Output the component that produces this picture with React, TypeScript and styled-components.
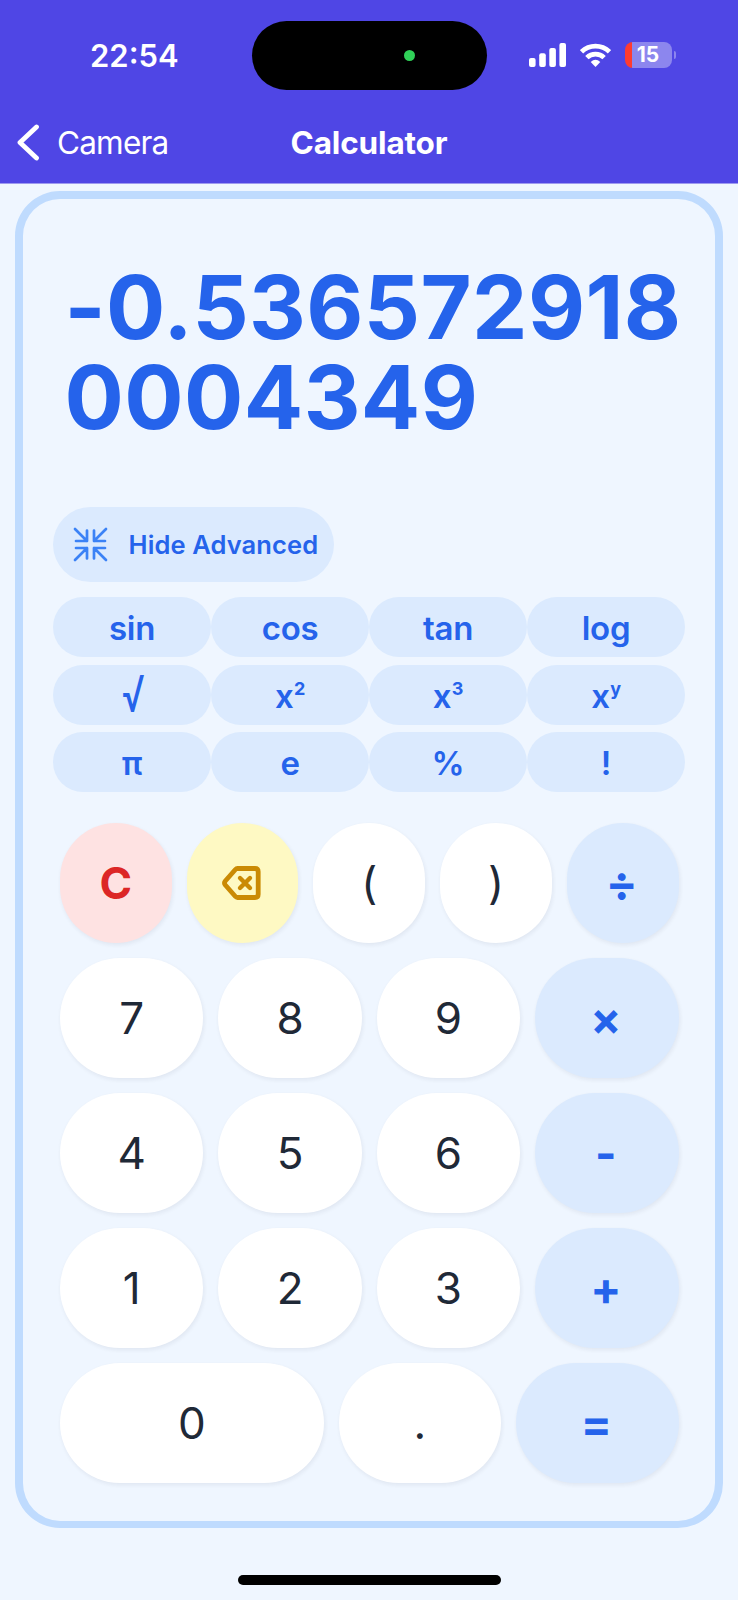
import React from 'react';
import styled, { createGlobalStyle } from 'styled-components';

const GlobalStyle = createGlobalStyle`
  *, *::before, *::after { box-sizing: border-box; }
  body {
    margin: 0;
    background: #eff6ff;
    font-family: Inter, "Liberation Sans", sans-serif;
  }
  button { font-family: inherit; border: 0; padding: 0; margin: 0; }
`;

const Screen = styled.div`
  display: flex;
  flex-direction: column;
  width: 738px;
  height: 1600px;
  background: #eff6ff;
  overflow: hidden;
`;

const Header = styled.header`
  height: 184px;
  background: #4f46e5;
  border-bottom: 1px solid #9d9af0;
  color: #fff;
`;

const StatusBar = styled.div`
  display: grid;
  grid-template-columns: 251.5px 235.5px 1fr;
  height: 90px;
  padding-top: 21px;
`;

const Clock = styled.div`
  padding-left: 90px;
  font-size: 31px;
  line-height: 69px;
  font-weight: 600;
`;

const Island = styled.div`
  display: flex;
  align-items: center;
  justify-content: flex-end;
  padding-right: 72.5px;
  height: 69px;
  border-radius: 35px;
  background: #000;
`;

const CameraDot = styled.span`
  width: 11px;
  height: 11px;
  border-radius: 50%;
  background: #30d158;
`;

const StatusIcons = styled.div`
  display: flex;
  align-items: center;
  height: 68px;
  padding-left: 42px;
`;

const SignalIcon = styled.svg`
  width: 37px;
  height: 24px;
  margin-right: 14px;
`;

const WifiIcon = styled.svg`
  width: 31px;
  height: 24px;
  margin-right: 14px;
`;

const Battery = styled.div`
  display: flex;
  align-items: center;
  justify-content: center;
  width: 47px;
  height: 26px;
  padding-right: 1px;
  border-radius: 8px;
  background: linear-gradient(90deg, #ff3b30 0 7px, #8c86ee 7px);
  font-size: 21px;
  line-height: 26px;
  font-weight: 700;
`;

const BatteryTip = styled.span`
  width: 2.5px;
  height: 8px;
  margin-left: 1.5px;
  border-radius: 0 3px 3px 0;
  background: #8c86ee;
`;

const NavBar = styled.nav`
  display: grid;
  grid-template-columns: 1fr auto 1fr;
  align-items: center;
  height: 93px;
  padding: 11px 17px 0;
`;

const BackLink = styled.div`
  display: flex;
  align-items: center;
  gap: 17px;
`;

const BackLabel = styled.span`
  padding-top: 1px;
  font-size: 31.5px;
  line-height: 40px;
  font-weight: 400;
  letter-spacing: -0.8px;
`;

const Title = styled.h1`
  margin: 0;
  padding-top: 1px;
  font-size: 31.5px;
  line-height: 40px;
  font-weight: 700;
  letter-spacing: -0.15px;
`;

const Panel = styled.main`
  width: 708px;
  height: 1337px;
  margin: 7px 15px 0;
  padding: 56px 30px 0;
  border: 8px solid #bfdbfe;
  border-bottom-width: 7px;
  border-radius: 45px;
  background: #eff6ff;
`;

const Display = styled.div`
  width: 632px;
  height: 252px;
  padding: 7px 0 0 11.5px;
  font-size: 88px;
  line-height: 90px;
  font-weight: 700;
  letter-spacing: 0.4px;
  color: #2563eb;
  word-break: break-all;
`;

const AdvancedToggle = styled.button`
  display: flex;
  align-items: center;
  width: 281px;
  height: 75px;
  padding-left: 20px;
  gap: 20.5px;
  border-radius: 38px;
  background: #dbeafe;
  color: #2563eb;
  font-size: 25.5px;
  font-weight: 600;
  letter-spacing: 0.12px;
  white-space: nowrap;
`;

const FunctionGrid = styled.div`
  display: grid;
  grid-template-columns: repeat(4, 1fr);
  grid-auto-rows: 60px;
  row-gap: 7.5px;
  margin-top: 15px;
`;

const FunctionKey = styled.button`
  padding-top: 2px;
  border-radius: 30px;
  background: #dbeafe;
  color: #2563eb;
  font-size: 33px;
  line-height: 58px;
  font-weight: 600;
  letter-spacing: -0.3px;
`;

const Exponent = styled.sup`
  margin-left: 0.5px;
  font-size: 18px;
  line-height: 0;
  font-weight: 700;
  vertical-align: 12.5px;
`;

const Radical = styled.span`
  display: inline-block;
  line-height: 40px;
  font-weight: 400;
  transform: translate(1px, -2px) scale(1.12, 1.54);
`;

const Keypad = styled.div`
  display: flex;
  flex-direction: column;
  gap: 15px;
  padding: 0 6.5px 0 7px;
  margin-top: 31px;
`;

const KeyRow = styled.div`
  display: flex;
  gap: 15px;
`;

type Tone = 'digit' | 'operator' | 'clear' | 'erase';

const tones: Record<Tone, { background: string; color: string; weight: number }> = {
  digit: { background: '#ffffff', color: '#1f2937', weight: 400 },
  operator: { background: '#dbeafe', color: '#2563eb', weight: 700 },
  clear: { background: '#fee2e2', color: '#dc2626', weight: 700 },
  erase: { background: '#fef9c3', color: '#ca8a04', weight: 700 },
};

const Key = styled.button<{ $tone: Tone; $grow?: number }>`
  display: flex;
  align-items: center;
  justify-content: center;
  flex: ${(p) => p.$grow ?? 1} 1 0;
  height: 120px;
  border-radius: 60px;
  background: ${(p) => tones[p.$tone].background};
  color: ${(p) => tones[p.$tone].color};
  font-size: 44px;
  line-height: 54px;
  font-weight: ${(p) => tones[p.$tone].weight};
  box-shadow: 1px 2px 4px rgba(30, 30, 60, 0.07);
`;

const KeySymbol = styled.span<{ $size: number }>`
  display: flex;
  margin-right: 2px;
  font-size: ${(p) => p.$size}px;
`;

const HomeIndicator = styled.div`
  width: 263px;
  height: 10px;
  margin: 47px auto 0;
  border-radius: 5px;
  background: #000;
`;

const CollapseIcon = () => (
  <svg width="35" height="35" viewBox="0 0 35 35" fill="none" stroke="#3b82f6" strokeWidth="2.7" strokeLinecap="round" strokeLinejoin="round">
    <path d="M2 2 14 14M14 3.5V14H3M33 2 21 14M21 3.5V14H32M2 33 14 21M14 31.5V21H3M33 33 21 21M21 31.5V21H32" />
  </svg>
);

const EraseIcon = () => (
  <svg width="39" height="34" viewBox="0 0 39 34" fill="none" stroke="currentColor" strokeWidth="4.8" strokeLinecap="round" strokeLinejoin="round">
    <path d="M15.5 2.5H33Q36.2 2.5 36.2 5.7V28.3Q36.2 31.5 33 31.5H15.5Q14.3 31.5 13.4 30.5L3.3 19Q1.7 17 3.3 15L13.4 3.5Q14.3 2.5 15.5 2.5Z" />
    <path d="M18 12 28 22M28 12 18 22" strokeWidth="4.4" />
  </svg>
);

const functions: { name: string; label: React.ReactNode }[] = [
  { name: 'sin', label: 'sin' },
  { name: 'cos', label: 'cos' },
  { name: 'tan', label: 'tan' },
  { name: 'log', label: 'log' },
  { name: 'sqrt', label: <Radical>√</Radical> },
  { name: 'square', label: <>x<Exponent>2</Exponent></> },
  { name: 'cube', label: <>x<Exponent>3</Exponent></> },
  { name: 'power', label: <>x<Exponent>y</Exponent></> },
  { name: 'pi', label: 'π' },
  { name: 'e', label: 'e' },
  { name: 'percent', label: '%' },
  { name: 'factorial', label: '!' },
];

const digitRows = [
  ['7', '8', '9', '×'],
  ['4', '5', '6', '-'],
  ['1', '2', '3', '+'],
];

const OperatorKey = ({ symbol, size = 46 }: { symbol: string; size?: number }) => (
  <Key $tone="operator">
    <KeySymbol $size={size}>{symbol}</KeySymbol>
  </Key>
);

export default function App() {
  return (
    <Screen>
      <GlobalStyle />
      <Header>
        <StatusBar>
          <Clock>22:54</Clock>
          <Island>
            <CameraDot />
          </Island>
          <StatusIcons>
            <SignalIcon viewBox="0 0 37 24" fill="#fff">
              <rect x="0" y="15" width="6.6" height="9" rx="2" />
              <rect x="10.2" y="10.2" width="6.6" height="13.8" rx="2" />
              <rect x="20.3" y="5" width="6.6" height="19" rx="2" />
              <rect x="30.4" y="0" width="6.6" height="24" rx="2" />
            </SignalIcon>
            <WifiIcon viewBox="0 0 31 24" fill="none" stroke="#fff" strokeWidth="4.8">
              <path d="M1.5 8.8A20 20 0 0 1 29.5 8.8" />
              <path d="M6.9 14.6A12.3 12.3 0 0 1 24.1 14.6" />
              <path d="M15.5 23.9 10.7 18.9Q15.5 14.6 20.3 18.9Z" fill="#fff" stroke="none" />
            </WifiIcon>
            <Battery>15</Battery>
            <BatteryTip />
          </StatusIcons>
        </StatusBar>
        <NavBar>
          <BackLink>
            <svg width="23" height="37" viewBox="0 0 23 37" fill="none" stroke="#fff" strokeWidth="4.8" strokeLinecap="round" strokeLinejoin="round">
              <path d="M19.5 3 3 18.5 19.5 34" />
            </svg>
            <BackLabel>Camera</BackLabel>
          </BackLink>
          <Title>Calculator</Title>
        </NavBar>
      </Header>
      <Panel>
        <Display>-0.5365729180004349</Display>
        <AdvancedToggle>
          <CollapseIcon />
          Hide Advanced
        </AdvancedToggle>
        <FunctionGrid>
          {functions.map(({ name, label }) => (
            <FunctionKey key={name}>{label}</FunctionKey>
          ))}
        </FunctionGrid>
        <Keypad>
          <KeyRow>
            <Key $tone="clear">C</Key>
            <Key $tone="erase" aria-label="Backspace">
              <KeySymbol $size={44}>
                <EraseIcon />
              </KeySymbol>
            </Key>
            <Key $tone="digit">(</Key>
            <Key $tone="digit">)</Key>
            <OperatorKey symbol="÷" size={47} />
          </KeyRow>
          {digitRows.map(([a, b, c, operator]) => (
            <KeyRow key={a}>
              <Key $tone="digit">{a}</Key>
              <Key $tone="digit">{b}</Key>
              <Key $tone="digit">{c}</Key>
              <OperatorKey symbol={operator} />
            </KeyRow>
          ))}
          <KeyRow>
            <Key $tone="digit" $grow={1.624}>0</Key>
            <Key $tone="digit">.</Key>
            <OperatorKey symbol="=" />
          </KeyRow>
        </Keypad>
      </Panel>
      <HomeIndicator />
    </Screen>
  );
}
